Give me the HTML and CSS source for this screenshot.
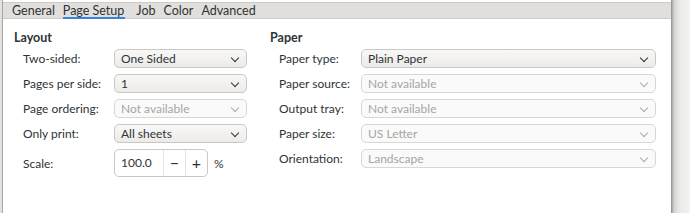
FILE: index.html
```html
<!DOCTYPE html>
<html lang="en">
<head>
    <meta charset="UTF-8">
    <title>Page Setup</title>
    <link rel="stylesheet" href="styles.css">
</head>
<body>
    <div class="screen">
        <div class="edge"></div>
        <div class="dialog">
            <div class="tabs">
                <span class="tab">General</span>
                <span class="tab active">Page Setup</span>
                <span class="tab">Job</span>
                <span class="tab">Color</span>
                <span class="tab">Advanced</span>
            </div>
            <div class="page">
                <div class="group layout">
                    <h3>Layout</h3>
                    <div class="form">
                        <label>Two-sided:</label>
                        <div class="combo">One Sided<span class="arrow"></span></div>
                        <label>Pages per side:</label>
                        <div class="combo">1<span class="arrow"></span></div>
                        <label>Page ordering:</label>
                        <div class="combo disabled">Not available<span class="arrow"></span></div>
                        <label>Only print:</label>
                        <div class="combo">All sheets<span class="arrow"></span></div>
                        <label class="scale-label">Scale:</label>
                        <div class="scale">
                            <div class="spin">
                                <span class="spin-value">100.0</span>
                                <span class="spin-btn">&minus;</span>
                                <span class="spin-btn">+</span>
                            </div>
                            <span class="unit">%</span>
                        </div>
                    </div>
                </div>
                <div class="group paper">
                    <h3>Paper</h3>
                    <div class="form">
                        <label>Paper type:</label>
                        <div class="combo">Plain Paper<span class="arrow"></span></div>
                        <label>Paper source:</label>
                        <div class="combo disabled">Not available<span class="arrow"></span></div>
                        <label>Output tray:</label>
                        <div class="combo disabled">Not available<span class="arrow"></span></div>
                        <label>Paper size:</label>
                        <div class="combo disabled">US Letter<span class="arrow"></span></div>
                        <label>Orientation:</label>
                        <div class="combo disabled">Landscape<span class="arrow"></span></div>
                    </div>
                </div>
            </div>
        </div>
        <div class="shadow"></div>
    </div>
</body>
</html>
```

FILE: styles.css
```css
body {
    margin: 0;
    font-family: Lato, "Noto Sans", sans-serif;
    font-size: 12px;
    color: #2e3436;
    background-color: #ffffff;
}

.screen {
    display: flex;
    height: 213px;
    overflow: hidden;
}

.edge {
    width: 2px;
    background-color: #e4e2df;
    border-right: 1px solid #a9a6a3;
}

.dialog {
    flex: 1;
    display: flex;
    flex-direction: column;
    background-color: #ffffff;
}

.shadow {
    width: 19px;
    background: linear-gradient(to right, #8f8d8b, #d4d3d2 3px, #e9e9e8 8px, #f3f3f3);
}

.tabs {
    display: flex;
    height: 15px;
    margin-top: 2px;
    border-top: 1px solid #cfccc8;
    border-bottom: 1px solid #cfccc8;
    background-color: #e1dedb;
    padding-left: 5px;
}

.tab {
    position: relative;
    padding: 0 4px;
    line-height: 15px;
    font-size: 12.5px;
    color: #2e3436;
}

.tab.active {
    margin-right: 4px;
}

.tab.active::after {
    content: "";
    position: absolute;
    left: 4px;
    right: 3px;
    bottom: -1px;
    height: 2px;
    background-color: #3584e4;
}

.page {
    display: flex;
    padding: 11px 0 0 11px;
}

.group h3 {
    margin: 0 0 3px 0;
    font-size: 12.5px;
    font-weight: bold;
    line-height: 16px;
}

.layout {
    width: 233px;
    margin-right: 23px;
}

.paper {
    width: 386px;
}

.form {
    display: grid;
    grid-template-columns: 91px 1fr;
    row-gap: 6px;
    align-items: center;
    padding-left: 9px;
}

.paper .form {
    grid-template-columns: 82px 1fr;
}

.combo {
    position: relative;
    height: 17px;
    line-height: 17px;
    padding: 0 6px;
    border: 1px solid #cdc7c2;
    border-radius: 5px;
    background: linear-gradient(#f8f8f7, #edebe9);
}

.combo.disabled {
    background: #fafafa;
    border-color: #dad6d2;
    color: #a4a6a5;
}

.arrow {
    position: absolute;
    right: 8px;
    top: 5px;
    width: 5px;
    height: 5px;
    border-right: 1.5px solid #2e3436;
    border-bottom: 1.5px solid #2e3436;
    transform: rotate(45deg);
}

.combo.disabled .arrow {
    border-color: #aaaaaa;
}

.scale {
    display: flex;
    align-items: center;
}

.spin {
    display: flex;
    height: 26px;
    border: 1px solid #cdc7c2;
    border-radius: 5px;
    background-color: #ffffff;
}

.spin-value {
    width: 42px;
    padding-left: 6px;
    line-height: 26px;
}

.spin-btn {
    width: 21px;
    border-left: 1px solid #e5e2df;
    text-align: center;
    line-height: 26px;
    font-size: 16px;
}

.unit {
    margin-left: 6px;
}
```
